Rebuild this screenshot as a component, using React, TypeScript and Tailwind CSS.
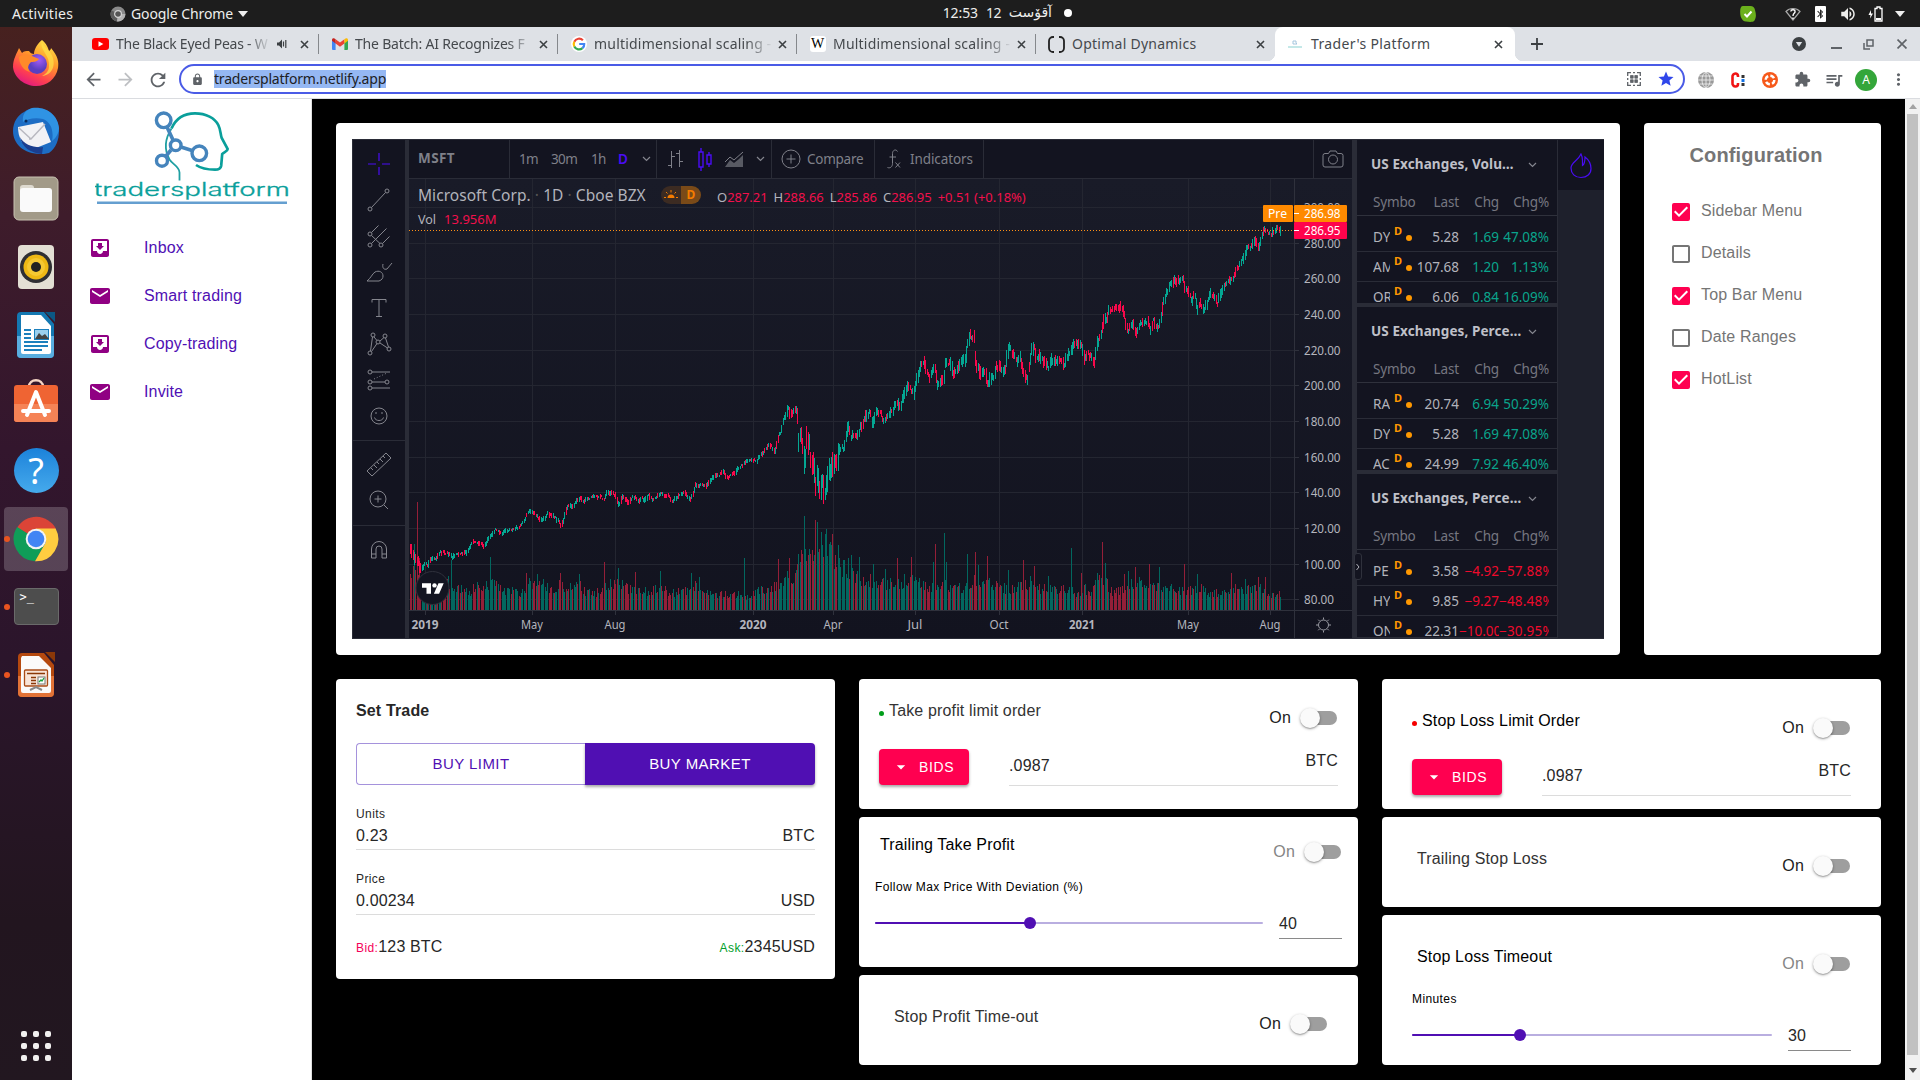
import React from "react";
import {
  MdArrowBack,
  MdArrowDropDown,
  MdArrowForward,
  MdBluetooth,
  MdCheckBox,
  MdCheckBoxOutlineBlank,
  MdExtension,
  MdLock,
  MdMail,
  MdMoreVert,
  MdMoveToInbox,
  MdQueueMusic,
  MdRefresh,
  MdStar,
  MdVolumeUp,
} from "react-icons/md";

const UI = "font-['Noto_Sans',sans-serif]";

/* ---------------------------------- System bar ---------------------------------- */

function SystemBar() {
  return (
    <div className={`${UI} flex h-[27px] w-full items-center bg-[#1d1d1d] text-[14px] text-[#eeeeec]`}>
      <span className="ml-3 w-[98px] tracking-[0.3px]">Activities</span>
      <svg width="16" height="16" viewBox="0 0 16 16">
        <circle cx="8" cy="8" r="7.5" fill="#8a8a8a" />
        <path d="M8 8 1.5 4.2A7.5 7.5 0 0 0 7 15.4z" fill="#5c5c5c" />
        <path d="M8 8h7.4A7.5 7.5 0 0 1 7 15.4z" fill="#b5b5b5" />
        <circle cx="8" cy="8" r="3.4" fill="#555" stroke="#d5d5d5" strokeWidth="1.2" />
      </svg>
      <span className="ml-[5px] tracking-[-0.1px]">Google Chrome</span>
      <svg className="ml-[5px]" width="10" height="6" viewBox="0 0 10 6"><path d="M0 0h10L5 6z" fill="#eee" /></svg>
      <div className="ml-auto flex -translate-y-px items-center">
        <span className="tracking-[-0.1px]">12:53</span>
        <span className="ml-2 tracking-[-0.5px]">12</span>
        <span className="ml-[5px] w-[46px] font-['DejaVu_Sans',sans-serif] text-[14px]" dir="rtl">آقۆست</span>
        <span className="ml-[12px] h-2 w-2 rounded-full bg-white" />
      </div>
      <div className="ml-[668px] mr-[15px] flex items-center">
        <svg width="16" height="16" viewBox="0 0 16 16">
          <path d="M3 0h7a5 5 0 0 1 5 4c1.500 5 1 8-.5 10.500C13 16.500 9 16 6 15.500 1 15 0 9 .2 5 .2 2 1 0 3 0z" fill="#6bb01c" />
          <path d="m4.500 8 2.500 2.500 4.500-5" fill="none" stroke="#fff" strokeWidth="2" />
        </svg>
        <svg className="ml-[29px]" width="16" height="14" viewBox="0 0 16 14">
          <path d="M8 13 1 4.500C4.500.5 11.500.5 15 4.500z" fill="none" stroke="#aaa" strokeWidth="1.200" />
          <path d="M5.800 4.500C6 2 10.500 2 10 5 9.700 6.500 8 6.500 8 9m0 1.500v1.500" fill="none" stroke="#fff" strokeWidth="1.400" />
        </svg>
        <span className="ml-[14px] flex h-4 w-[11px] items-center justify-center rounded-[1px] bg-white text-[#1d1d1d]"><MdBluetooth size={14} /></span>
        <MdVolumeUp className="ml-[13px]" size={18} />
        <svg className="ml-[11px]" width="16" height="16" viewBox="0 0 16 16">
          <path d="M3 4 .500 9h2L2 12.500 5 7.500H3z" fill="#fff" />
          <path d="M7 2.500h2V1h3v1.500h2V15H7z" fill="none" stroke="#fff" strokeWidth="1.300" />
          <path d="M8 12h5v2H8z" fill="#fff" />
        </svg>
        <svg className="ml-[11px]" width="10" height="6" viewBox="0 0 10 6"><path d="M0 0h10L5 6z" fill="#eee" /></svg>
      </div>
    </div>
  );
}

/* ------------------------------------- Dock ------------------------------------- */

function FirefoxIcon() {
  return (
    <svg width="48" height="48" viewBox="0 0 48 48">
      <defs>
        <linearGradient id="ffA" x1="0.8" y1="0" x2="0.3" y2="1">
          <stop offset="0" stopColor="#ffe84a" /><stop offset="0.4" stopColor="#ff9a2a" /><stop offset="0.75" stopColor="#ff4050" /><stop offset="1" stopColor="#e01882" />
        </linearGradient>
        <radialGradient id="ffB" cx="0.6" cy="0.3"><stop offset="0" stopColor="#a45cf5" /><stop offset="1" stopColor="#5a3fc0" /></radialGradient>
      </defs>
      <path d="M30 1c5 4 6 8 7 11 2-1 2-3 2-3 7 8 8 14 7 20-2 11-11 18-22 18S2 39 1 28C1 20 5 14 7 9l3 5c2-2 4-2 7-2 1 2 3 3 5 3 0-5 4-11 8-14z" fill="url(#ffA)" />
      <circle cx="25" cy="25" r="10" fill="url(#ffB)" />
      <path d="M7 18c5-4 10-3 13-1l7 3c-2 3-6 3-8 3-3 3-4 6-1 10-6-1-11-8-11-15z" fill="#ff8a2a" />
      <path d="M30 3c-3 7 8 13 7 24 0 5-3 8-7 10 12-1 15-14 8-24-3-4-6-5-8-10z" fill="#ffdf48" opacity=".75" />
    </svg>
  );
}

function ThunderbirdIcon() {
  return (
    <svg width="48" height="48" viewBox="0 0 48 48">
      <path d="M24 1c13 0 23 9 23 23 0 9-3 17-10 22l-5 1C12 48 1 37 1 24 1 15 6 8 12 5c4-3 8-4 12-4z" fill="#1d6dc4" />
      <path d="M20 1c-6 2-10 6-9 14 4-3 12-5 20-3 8 3 11 12 9 22 4-3 7-8 7-13C46 8 34-1 20 1z" fill="#2f93e4" />
      <path d="M6 20 31 15l8 20-20 8c-8-4-13-12-13-23z" fill="#f2f2f5" />
      <path d="m7 21 12 11 14-15M19 32l-2 0" fill="none" stroke="#b8b8c0" strokeWidth="1.500" />
      <path d="M8 30c4 8 14 11 23 10l-1 7C18 46 10 40 8 30z" fill="#1b3e8f" />
      <circle cx="14" cy="14" r="1.500" fill="#092c5c" />
    </svg>
  );
}

function FilesIcon() {
  return (
    <svg width="46" height="46" viewBox="0 0 46 46">
      <rect x="1" y="1" width="44" height="43" rx="5" fill="#a29a88" />
      <rect x="1" y="1" width="44" height="43" rx="5" fill="none" stroke="#c8c1b1" />
      <path d="M7 12a3 3 0 0 1 3-3h8a3 3 0 0 1 3 3v3H7z" fill="#dedad0" />
      <rect x="7" y="12" width="32" height="24" rx="3" fill="#fafafa" />
    </svg>
  );
}

function RhythmboxIcon() {
  return (
    <svg width="38" height="46" viewBox="0 0 38 46">
      <rect x="1" y="1" width="36" height="44" rx="4" fill="#e3dfd4" />
      <circle cx="19" cy="23" r="16" fill="#2f2f33" />
      <circle cx="19" cy="23" r="12.500" fill="#eeb814" />
      <circle cx="19" cy="23" r="9" fill="#f5c832" />
      <circle cx="19" cy="23" r="5" fill="#222" />
    </svg>
  );
}

function WriterIcon() {
  return (
    <svg width="38" height="46" viewBox="0 0 38 46">
      <path d="M4 0h23l10 12v30a4 4 0 0 1-4 4H4a4 4 0 0 1-4-4V4a4 4 0 0 1 4-4z" fill="#1478b2" />
      <path d="M0 24h37v18a4 4 0 0 1-4 4H4a4 4 0 0 1-4-4z" fill="#59aee0" />
      <path d="M4 3h20l10 11v26a2 2 0 0 1-2 2H6a2 2 0 0 1-2-2z" fill="#fff" />
      <path d="M28 0h10v10z" fill="#0b5885" />
      <path d="M7 18h7M7 22h7M7 26h7M7 30h24M7 34h24M7 38h18" stroke="#1c80bd" strokeWidth="2" />
      <rect x="17.500" y="17.500" width="14" height="10" fill="#9bd0ef" stroke="#1c80bd" />
      <path d="m18 27 4-6 3 3 3-2 4 5z" fill="#444" />
    </svg>
  );
}

function SoftwareIcon() {
  return (
    <svg className="-mt-[5px]" width="46" height="48" viewBox="0 0 46 48">
      <path d="M16 10C16 1 30 1 30 10" fill="none" stroke="#f5d5c5" strokeWidth="2.500" />
      <path d="M4 8h38a3 3 0 0 1 3 3v31a3 3 0 0 1-3 3H4a3 3 0 0 1-3-3V11a3 3 0 0 1 3-3z" fill="#ef6433" />
      <path d="M1 27h44v15a3 3 0 0 1-3 3H4a3 3 0 0 1-3-3z" fill="#f58356" />
      <path d="m14 38 9-23 9 23M10 34h26" fill="none" stroke="#fff" strokeWidth="4" strokeLinecap="round" strokeLinejoin="round" />
    </svg>
  );
}

function HelpIcon() {
  return (
    <span className="-mt-px flex h-[45px] w-[45px] items-center justify-center rounded-full bg-linear-to-b from-[#1b82da] to-[#45aaec] font-['Noto_Sans',sans-serif] text-[36px] leading-none text-white">
      ?
    </span>
  );
}

function ChromeIcon() {
  return (
    <svg width="46" height="46" viewBox="0 0 46 46">
      <path d="M23 23 4.200 11.500A22.300 22.300 0 0 1 42.800 12.500z" fill="#db4437" />
      <path d="M23 23 4.200 11A22.300 22.300 0 0 0 22 45.300L32 28z" fill="#0f9d58" />
      <path d="M23 12.500h19.600A22.300 22.300 0 0 1 22 45.300L33 26z" fill="#ffcd40" />
      <circle cx="23" cy="23" r="10.300" fill="#f4f4f4" />
      <circle cx="23" cy="23" r="8.300" fill="#4285f4" />
    </svg>
  );
}

function TerminalIcon() {
  return (
    <span className="-mt-px h-[37px] w-[45px] rounded-[4px] border border-[#6a6a6a] bg-[#4d4d4d] pl-[5px] font-['DejaVu_Sans_Mono',monospace] text-[12px] leading-[17px] text-white">
      &gt;_
    </span>
  );
}

function ImpressIcon() {
  return (
    <svg width="37" height="46" viewBox="0 0 37 46">
      <path d="M4 1h22l10 12v28a4 4 0 0 1-4 4H4a4 4 0 0 1-4-4V5a4 4 0 0 1 4-4z" fill="#b5490f" />
      <path d="M0 24h36v17a4 4 0 0 1-4 4H4a4 4 0 0 1-4-4z" fill="#e27337" />
      <path d="M4 4h17l12 12v23a2 2 0 0 1-2 2H5a2 2 0 0 1-2-2V6z" fill="#fbfafa" />
      <path d="M27 0h10v10z" fill="#8b3808" />
      <rect x="6.500" y="18" width="23" height="16" rx="1" fill="#f8e4d8" stroke="#a94b17" strokeWidth="1.300" />
      <path d="M9 21.500h18M13 25.500h5M13 28.500h5M13 31.500h5" stroke="#8b3808" strokeWidth="1.700" />
      <rect x="20" y="25" width="7" height="7" fill="#fff" stroke="#777" />
      <path d="m21 30 2-2 1 1 2-3" fill="none" stroke="#1aa13c" strokeWidth="1.300" />
      <path d="m12 38 6-3 6 3" fill="none" stroke="#888" strokeWidth="2" />
    </svg>
  );
}

const dockItems = [
  { icon: <FirefoxIcon />, running: false, active: false },
  { icon: <ThunderbirdIcon />, running: false, active: false },
  { icon: <FilesIcon />, running: false, active: false },
  { icon: <RhythmboxIcon />, running: false, active: false },
  { icon: <WriterIcon />, running: false, active: false },
  { icon: <SoftwareIcon />, running: false, active: false },
  { icon: <HelpIcon />, running: false, active: false },
  { icon: <ChromeIcon />, running: true, active: true },
  { icon: <TerminalIcon />, running: true, active: false },
  { icon: <ImpressIcon />, running: true, active: false },
];

function Dock() {
  return (
    <div className="flex w-[72px] shrink-0 flex-col bg-[linear-gradient(180deg,#47211f_0%,#3e1c2b_18%,#33162d_40%,#2b152b_60%,#22151f_85%,#221720_100%)] pt-[2px]">
      {dockItems.map((item, i) => (
        <div key={i} className="relative flex h-[68px] items-center justify-center">
          {item.active && <span className="absolute inset-x-1 inset-y-[2px] rounded-[4px] bg-white/20" />}
          {item.running && <span className="absolute left-1 h-[6px] w-[6px] rounded-full bg-[#e95420]" />}
          <span className="relative flex">{item.icon}</span>
        </div>
      ))}
      <div className="mb-[19px] ml-[21px] mt-auto grid w-[30px] grid-cols-3 gap-[6px]">
        {Array.from({ length: 9 }, (_, i) => (
          <span key={i} className="h-[6px] w-[6px] rounded-[2px] bg-[#f2f1f0]" />
        ))}
      </div>
    </div>
  );
}

/* ------------------------------------ Browser ------------------------------------ */

function YoutubeIcon() {
  return (
    <svg width="17" height="12" viewBox="0 0 17 12"><rect width="17" height="12" rx="3" fill="#f00" /><path d="M6.500 3.200v5.600L11.300 6z" fill="#fff" /></svg>
  );
}
function GmailIcon() {
  return (
    <svg width="16" height="12" viewBox="0 0 16 12">
      <path d="M0 2v9a1 1 0 0 0 1 1h2.600V4z" fill="#4285f4" />
      <path d="M16 2v9a1 1 0 0 1-1 1h-2.600V4z" fill="#34a853" />
      <path d="M3.600 1.200 8 4.500l4.400-3.300V5.500L8 8.800 3.600 5.500z" fill="#ea4335" />
      <path d="M0 1.800C0 .2 1.900-.5 3.600 1.200V5.500L0 2.800z" fill="#c5221f" />
      <path d="M16 1.800C16 .2 14.100-.5 12.400 1.200V5.500L16 2.800z" fill="#fbbc04" />
    </svg>
  );
}
function GoogleIcon() {
  return (
    <svg width="16" height="16" viewBox="0 0 16 16">
      <circle cx="8" cy="8" r="8" fill="#fff" />
      <path d="M11.900 4.300A5.300 5.300 0 0 0 3.300 5.700" fill="none" stroke="#ea4335" strokeWidth="2.200" />
      <path d="M3.300 5.700a5.300 5.300 0 0 0 0 4.800" fill="none" stroke="#fbbc05" strokeWidth="2.200" />
      <path d="M3.300 10.500a5.300 5.300 0 0 0 8.200 1.600" fill="none" stroke="#34a853" strokeWidth="2.200" />
      <path d="M11.500 12.100A5 5 0 0 0 13.200 8H8.200" fill="none" stroke="#4285f4" strokeWidth="2.200" />
    </svg>
  );
}
function WikiIcon() {
  return <span className="flex h-4 w-4 items-center justify-center rounded-[3px] bg-white font-['Liberation_Serif',serif] text-[14px] font-medium leading-none text-black">W</span>;
}
function OptimalIcon() {
  return (
    <svg width="17" height="17" viewBox="0 0 17 17"><path d="M6 1H5a4 4 0 0 0-4 4v7a4 4 0 0 0 4 4h1M11 1h1a4 4 0 0 1 4 4v7a4 4 0 0 1-4 4h-1" fill="none" stroke="#222" strokeWidth="1.800" /></svg>
  );
}
function TraderIcon() {
  return (
    <svg width="14" height="8" viewBox="0 0 14 8"><path d="M0 7h14" stroke="#a5dcdc" strokeWidth="1.300" /><path d="M5 1h3v2l1 1H5z" fill="none" stroke="#a5c6de" /></svg>
  );
}
function CloseIcon() {
  return (
    <svg width="9" height="9" viewBox="0 0 9 9"><path d="m1 1 7 7M8 1 1 8" stroke="#3c4043" strokeWidth="1.600" /></svg>
  );
}

const tabs = [
  { icon: <YoutubeIcon />, title: "The Black Eyed Peas - W", audio: true, fade: true, track: "tracking-[-0.25px]" },
  { icon: <GmailIcon />, title: "The Batch: AI Recognizes F", audio: false, fade: true, track: "tracking-[-0.2px]" },
  { icon: <GoogleIcon />, title: "multidimensional scaling -", audio: false, fade: true, track: "tracking-[0.2px]" },
  { icon: <WikiIcon />, title: "Multidimensional scaling -", audio: false, fade: true, track: "tracking-[0.2px]" },
  { icon: <OptimalIcon />, title: "Optimal Dynamics", audio: false, fade: false, track: "tracking-[0.25px]" },
];

function TabStrip() {
  return (
    <div className={`${UI} flex h-[34px] items-center bg-[#dee1e6] pl-2 text-[14px] text-[#45494d]`}>
      {tabs.map((t, i) => (
        <div key={t.title} className="flex h-full w-[239px] items-center pl-3">
          <span className="flex w-[17px] justify-center">{t.icon}</span>
          <span
            className={`-mt-[2px] ml-[7px] overflow-hidden whitespace-nowrap ${t.track} ${t.audio ? "w-[155px]" : "w-[179px]"} ${
              t.fade ? "[mask-image:linear-gradient(90deg,#000_85%,transparent_100%)]" : ""
            }`}
          >
            {t.title}
          </span>
          {t.audio && (
            <svg className="ml-[6px] mr-[9px]" width="10" height="10" viewBox="0 0 10 10">
              <path d="M0 3.500h2L5 .5v9L2 6.500H0z" fill="#3c4043" /><path d="M6.500 2.500v5M8.800 1v8" stroke="#3c4043" strokeWidth="1.200" />
            </svg>
          )}
          <span className={t.audio ? "ml-[4px]" : "ml-[5px]"}><CloseIcon /></span>
          {i < 4 && <span className="ml-auto h-5 w-px bg-[#85888c]" />}
        </div>
      ))}
      <div className="relative flex h-[34px] w-[240px] items-center rounded-t-[8px] bg-white pl-[13px]">
        <span className="absolute -left-2 bottom-0 h-2 w-2 bg-[radial-gradient(circle_at_0_0,#dee1e6_8px,#fff_8.5px)]" />
        <span className="absolute -right-2 bottom-0 h-2 w-2 bg-[radial-gradient(circle_at_100%_0,#dee1e6_8px,#fff_8.5px)]" />
        <TraderIcon />
        <span className="-mt-[2px] ml-[9px] w-[183px] tracking-[0.35px]">Trader's Platform</span>
        <CloseIcon />
      </div>
      <svg className="ml-4" width="12" height="12" viewBox="0 0 12 12"><path d="M6 0v12M0 6h12" stroke="#3c4043" strokeWidth="1.800" /></svg>
      <div className="ml-auto mr-[13px] flex items-center">
        <svg width="14" height="14" viewBox="0 0 14 14"><circle cx="7" cy="7" r="7" fill="#3c4043" /><path d="M3.800 5h6.400L7 9.800z" fill="#dee1e6" /></svg>
        <svg className="ml-[25px] mt-2" width="11" height="2"><path d="M0 0h11v2H0z" fill="#5f6368" /></svg>
        <svg className="ml-[21px]" width="11" height="11" viewBox="0 0 11 11"><path d="M4 1h6v6H4zM1 4v6h6" fill="none" stroke="#5f6368" strokeWidth="1.500" /></svg>
        <span className="ml-[23px]"><svg width="10" height="10" viewBox="0 0 9 9"><path d="m.5.5 8 8M8.500.5l-8 8" stroke="#5f6368" strokeWidth="1.500" /></svg></span>
      </div>
    </div>
  );
}

function AddressBar() {
  return (
    <div className="flex h-[38px] items-center border-b border-[#dadce0] bg-white text-[#5f6368]">
      <MdArrowBack className="ml-[11px]" size={21} />
      <MdArrowForward className="ml-[11px] text-[#bdbfc2]" size={21} />
      <MdRefresh className="ml-[11px]" size={22} />
      <div className="-mt-px ml-[10px] flex h-[30px] w-[1506px] items-center rounded-full border-2 border-[#4a5be6] bg-white">
        <MdLock className="ml-[10px]" size={13} />
        <span className={`${UI} ml-[10px] h-[18px] w-[172px] whitespace-nowrap bg-[#95b8f3] text-[14px] leading-[18px] tracking-[-0.2px] text-[#202124]`}>
          tradersplatform.netlify.app
        </span>
        <svg className="ml-auto" width="14" height="14" viewBox="0 0 14 14" fill="none" stroke="#5f6368" strokeWidth="1.300">
          <path d="M.7 4V.7H4M10 .7h3.300V4M13.300 10v3.300H10M4 13.300H.7V10M6 .7h2M6 13.300h2M.7 6v2M13.300 6v2" />
          <path d="M3.500 3.500h2.700v2.700H3.500zM7.800 3.500h2.700v2.700H7.800zM3.500 7.800h2.700v2.700H3.500zM7.800 7.800h2.700v2.700H7.800z" fill="#5f6368" strokeWidth=".8" />
        </svg>
        <MdStar className="ml-[16px] mr-[8px] text-[#2f46ea]" size={18} />
      </div>
      <div className="ml-[5px] flex items-center">
        <span className="flex w-8 justify-center">
          <svg width="16" height="16" viewBox="0 0 16 16" fill="none" stroke="#f2f2f2" strokeWidth=".8">
            <circle cx="8" cy="8" r="8" fill="#999" stroke="none" />
            <path d="M8 0v16M0 8h16M1.500 4h13M1.500 12h13" /><ellipse cx="8" cy="8" rx="4" ry="7.500" />
          </svg>
        </span>
        <span className="flex w-8 justify-center">
          <svg width="16" height="16" viewBox="0 0 16 16">
            <path d="M8 5V4a2.500 2.500 0 0 0-2.500-2.500A3 3 0 0 0 2.500 5v6a3 3 0 0 0 3 3.500A2.500 2.500 0 0 0 8 12v-1" fill="none" stroke="#f01414" strokeWidth="2.600" />
            <path d="M11.500 3h3v3h-3zM11.500 11h3v3h-3z" fill="#333" /><path d="M11.500 7h3v3h-3z" fill="#1273e6" />
          </svg>
        </span>
        <span className="flex w-8 justify-center">
          <svg width="16" height="16" viewBox="0 0 16 16">
            <circle cx="8" cy="8" r="8" fill="#f6591b" />
            <circle cx="8" cy="8" r="4.300" fill="none" stroke="#fff" strokeWidth="2.400" strokeDasharray="4.500 2.200" />
          </svg>
        </span>
        <span className="flex w-8 justify-center"><MdExtension size={17} /></span>
        <span className="flex w-8 justify-center"><MdQueueMusic size={20} /></span>
        <span className="flex w-8 justify-center">
          <span className={`${UI} flex h-[22px] w-[22px] items-center justify-center rounded-full bg-[#34a63a] text-[12px] text-white`}>A</span>
        </span>
        <span className="flex w-8 justify-center"><MdMoreVert size={19} /></span>
      </div>
    </div>
  );
}

/* ------------------------------------ Sidebar ------------------------------------ */

function Logo() {
  return (
    <svg width="198" height="97" viewBox="0 0 198 97">
      <path d="M76.500 18.500C81 8 90 3.300 100 3.300c11 0 20 5 23.300 11.700 2.500 5 2 9 3.400 13l6 11c0 2.500-4 3-5.500 5l-1 11.700c-.5 3-2.500 4-6.200 4-8 0-15-2-19-4.700" fill="none" stroke="#0a9f9b" strokeWidth="2.700" />
      <path d="M76.500 18.500c-7 11-7 22-2 31 3 5 10 7 10 13v8" fill="none" stroke="#1f9fa2" strokeWidth="1.800" />
      <path d="M72 17l6 13M86 37l11 3.500M76 40l-5 6" fill="none" stroke="#4584bc" strokeWidth="3.600" />
      <g stroke="#4584bc" strokeWidth="3.400" fill="#fff">
        <circle cx="68.700" cy="10.300" r="7.300" /><circle cx="80.700" cy="35.300" r="5.300" /><circle cx="104.300" cy="43.300" r="7.300" /><circle cx="67" cy="50.700" r="5.500" />
      </g>
      <text x="-1" y="86.200" textLength="196" lengthAdjust="spacingAndGlyphs" fontFamily="Inter, sans-serif" fontWeight="300" fontSize="18" fill="#0a9f9b" stroke="#0a9f9b" strokeWidth=".3">tradersplatform</text>
      <path d="M2 92.700h190" stroke="#659fd0" strokeWidth="2.500" />
    </svg>
  );
}

const menu = [
  { label: "Inbox", icon: MdMoveToInbox },
  { label: "Smart trading", icon: MdMail },
  { label: "Copy-trading", icon: MdMoveToInbox },
  { label: "Invite", icon: MdMail },
];

function Sidebar() {
  return (
    <div className="flex w-[240px] shrink-0 flex-col border-r border-[#e0e0e0] bg-white font-['Liberation_Sans',sans-serif]">
      <div className="ml-[23px] mt-[11px] h-[114px]"><Logo /></div>
      {menu.map(({ label, icon: Icon }) => (
        <div key={label} className="flex h-12 items-center pl-4 text-base tracking-[0.15px] text-[#4f0fb4]">
          <Icon size={24} className="text-[#900083]" />
          <span className="ml-8">{label}</span>
        </div>
      ))}
    </div>
  );
}

/* ------------------------------------- Chart ------------------------------------- */

/* Turning points of the price line, as flat x, y lists in thirds of a pixel. */
const priceA: number[] = [
  30,505, 38,525, 45,540, 52,545, 60,572, 68,562, 75,545, 82,558, 90,535, 100,535, 110,535, 120,518, 130,518, 140,520, 150,522, 157,536,
  165,522, 175,525, 185,520, 195,518, 205,510, 212,498, 220,485, 235,490, 245,492, 253,498, 262,480, 275,462, 285,450, 295,455, 305,462,
  315,453, 330,450, 345,445, 360,438, 370,425, 378,410, 385,392, 395,395, 405,402, 412,410, 420,420, 430,418, 437,410, 442,398, 450,405,
  462,410, 475,420, 482,438, 490,420, 497,395, 503,377, 515,380, 525,370, 540,352, 548,368, 556,360, 570,355, 585,350, 600,350, 610,358,
  618,343, 632,335, 645,345, 656,378, 665,350, 675,355, 685,370, 695,352, 705,350, 712,368, 722,355, 732,360, 745,345, 755,360, 765,355,
  775,345, 785,340, 795,350, 805,345, 815,366, 825,355, 840,345, 850,335, 858,348, 870,355, 878,340, 885,315, 900,315, 918,316, 930,300,
  945,283, 955,288, 970,275, 982,295, 995,280, 1005,280, 1015,262, 1025,258, 1035,245, 1050,240, 1062,240, 1070,240, 1080,225, 1092,215,
  1105,195, 1115,200, 1123,220, 1130,190, 1135,165, 1142,160, 1150,115, 1158,100, 1165,85, 1172,105, 1180,92, 1187,90, 1192,120, 1196,185,
  1202,165, 1208,215, 1214,250, 1218,180, 1226,190, 1233,245, 1240,250, 1247,320, 1252,260, 1257,345, 1262,330, 1267,300, 1273,345,
  1280,310, 1288,265, 1295,260, 1300,235, 1308,270, 1315,210, 1322,200, 1330,205, 1337,165, 1345,135, 1352,175, 1362,160, 1372,165, 1380,145,
];
const priceB: number[] = [
  5,685, 12,655, 22,643, 30,640, 37,670, 45,640, 60,640, 70,663, 80,650, 90,640, 98,632, 108,600, 113,615, 120,620, 125,600, 135,580, 145,555,
  155,575, 162,570, 170,530, 180,500, 190,480, 200,520, 208,535, 217,505, 225,510, 230,555, 240,540, 250,545, 254,485, 262,490, 270,490,
  278,525, 290,505, 305,485, 315,480, 322,425, 328,405, 335,415, 341,405, 347,500, 355,500, 362,530, 372,510, 380,550, 385,555, 392,530,
  400,530, 408,500, 418,500, 426,520, 436,500, 442,460, 448,435, 456,460, 463,465, 470,480, 480,475, 487,500, 495,530, 502,535, 508,490,
  516,440, 523,435, 528,485, 536,465, 545,475, 555,490, 564,500, 575,480, 590,482, 605,485, 613,495, 622,465, 630,455, 640,430, 650,430,
  657,425, 665,440, 672,480, 682,465, 692,470, 704,485, 710,435, 718,410, 726,385, 732,350, 737,360, 745,335, 755,335, 765,325, 778,320,
  790,330, 797,370, 805,390, 812,370, 820,375, 827,405, 835,380, 845,370, 855,365, 862,360, 870,390, 878,360, 886,375, 895,380, 902,360,
  908,310, 915,290, 925,262, 935,248, 945,240, 955,245, 968,228, 975,265, 985,280, 995,305, 1003,280, 1012,325, 1020,310, 1032,330,
  1042,305, 1052,280, 1062,290, 1072,310, 1080,280, 1090,260, 1102,245, 1110,245, 1120,230, 1130,205, 1140,190, 1150,170, 1160,145,
  1170,145, 1180,125, 1190,130, 1193,145, 1200,125, 1208,90, 1215,95, 1222,98, 1232,102, 1240,90, 1250,80, 1258,90,
];
const volumeA: number[] = [
  28,95, 36,150, 60,150, 75,100, 150,90, 165,75, 200,60, 260,90, 280,90, 310,65, 370,60, 380,90, 410,85, 430,90, 470,60, 480,90, 500,75,
  540,85, 560,55, 600,60, 650,100, 680,75, 700,60, 760,65, 780,85, 800,60, 860,60, 880,85, 910,52, 1000,52, 1040,46, 1070,62, 1120,76,
  1140,90, 1160,105, 1180,90, 1195,180, 1210,230, 1220,170, 1240,190, 1250,250, 1270,235, 1290,195, 1310,160, 1330,135, 1360,110, 1380,110,
];
const volumeB: number[] = [
  20,98, 50,88, 100,86, 140,96, 170,94, 200,85, 240,60, 250,95, 265,80, 320,72, 340,105, 370,88, 420,78, 450,68, 500,86, 520,98, 540,65,
  560,72, 600,62, 630,80, 645,45, 670,72, 690,58, 720,95, 740,85, 760,55, 800,78, 830,92, 860,68, 900,80, 940,68, 1000,62, 1020,72, 1040,56,
  1080,58, 1120,72, 1160,68, 1210,68, 1220,50, 1260,45,
];
const spikesA: number[] = [
  52,324, 43,198, 153,150, 271,158, 380,110, 412,108, 482,110, 535,108, 611,143, 653,125, 706,113, 781,116, 874,110, 898,98, 1030,155,
  1132,152, 1166,155, 1210,281, 1247,270, 1297,228, 1312,195, 1343,155, 1352,165, 1378,158,
];
const spikesB: number[] = [
  40,138, 76,123, 112,155, 154,158, 220,145, 226,197, 253,231, 257,143, 322,168, 345,173, 352,135, 382,162, 442,120, 490,150, 523,132,
  565,102, 631,186, 664,110, 709,110, 727,204, 733,142, 793,107, 805,116, 826,130, 868,138, 898,128, 973,138, 1012,107, 1114,110,
  1156,92, 1192,98, 1217,98, 1255,56,
];
/* Volume spikes that close on a falling day. */
const redSpikesA = new Set([52, 380, 482, 611, 706, 1132, 1166, 1247, 1297]);
const redSpikesB = new Set([112, 154, 226, 345, 382, 490, 523, 664, 727, 793, 826, 868, 973, 1114, 1192, 1217, 1255]);

interface Spike { x: number; height: number; up: boolean }

function pairs(flat: number[], dx: number, dy: number): [number, number][] {
  const out: [number, number][] = [];
  for (let i = 0; i < flat.length; i += 2) out.push([flat[i] / 3 + dx, flat[i + 1] / 3 + dy]);
  return out;
}
function toSpikes(flat: number[], dx: number, red: Set<number>): Spike[] {
  const out: Spike[] = [];
  for (let i = 0; i < flat.length; i += 2) out.push({ x: flat[i] / 3 + dx, height: flat[i + 1] / 3, up: !red.has(flat[i]) });
  return out;
}
function sample(points: [number, number][], x: number): number {
  if (x <= points[0][0]) return points[0][1];
  for (let i = 1; i < points.length; i++) {
    if (x <= points[i][0]) {
      const [x0, y0] = points[i - 1];
      const [x1, y1] = points[i];
      return y0 + ((y1 - y0) * (x - x0)) / (x1 - x0);
    }
  }
  return points[points.length - 1][1];
}

const price = [...pairs(priceA, 400, 380), ...pairs(priceB, 860, 200)];
const volume = [...pairs(volumeA, 400, 0), ...pairs(volumeB, 860, 0)];
const spikes = [...toSpikes(spikesA, 400, redSpikesA), ...toSpikes(spikesB, 860, redSpikesB)];

function makeRandom(seed: number) {
  let s = seed;
  return () => {
    s = (s * 1103515245 + 12345) % 2147483648;
    return s / 2147483648;
  };
}

interface Bar { x: number; top: number; height: number; volume: number; up: boolean }

function buildBars(): Bar[] {
  const rnd = makeRandom(77);
  const result: Bar[] = [];
  const step = 1.308;
  for (let i = 0; 410 + i * step < 1280; i++) {
    const exact = 410 + i * step;
    const x = Math.round(exact);
    const y = sample(price, exact);
    const slope = sample(price, exact + 1) - sample(price, exact - 1);
    const vol = exact < 422 ? 5 : exact < 785 ? 2 : exact < 796 ? 4 : exact < 838 ? 9 : exact < 960 ? 4.500 : exact < 1110 ? 4.500 : 3.700;
    const half = vol * (0.35 + rnd() * 1.0) + Math.abs(slope) * 0.22;
    const mid = y + (rnd() - 0.5) * vol;
    const up = slope < -1.2 ? rnd() < 0.75 : slope > 1.2 ? rnd() < 0.22 : rnd() < 0.5;
    result.push({ x, top: mid - half, height: Math.max(2, half * 2), volume: sample(volume, exact) * (0.66 + rnd() * 0.48), up });
  }
  spikes.forEach((s) => {
    const near = result.reduce((a, b) => (Math.abs(b.x - s.x) < Math.abs(a.x - s.x) ? b : a));
    near.volume = s.height;
    near.up = s.up;
  });
  return result;
}
const bars = buildBars();

const hLines = [207, 243, 278, 314, 350, 385, 421, 457, 492, 528, 564, 599];
const priceLabels = ["300.00", "280.00", "260.00", "240.00", "220.00", "200.00", "180.00", "160.00", "140.00", "120.00", "100.00", "80.00"];
const timeLabels = [
  { x: 425, t: "2019", w: 27, bold: true }, { x: 532, t: "May", w: 22, bold: false }, { x: 615, t: "Aug", w: 21, bold: false },
  { x: 753, t: "2020", w: 27, bold: true }, { x: 833, t: "Apr", w: 19, bold: false }, { x: 915, t: "Jul", w: 15, bold: false },
  { x: 999, t: "Oct", w: 19, bold: false }, { x: 1082, t: "2021", w: 26, bold: true }, { x: 1188, t: "May", w: 22, bold: false },
  { x: 1270, t: "Aug", w: 21, bold: false },
];

function ChartCanvas() {
  return (
    <svg className="block" width="943" height="459" viewBox="409 179 943 459" fontFamily="Noto Sans, sans-serif" fontSize="12">
      <defs>
        <linearGradient id="bg" x1="0" y1="0" x2="0" y2="1"><stop offset="0" stopColor="#191b28" /><stop offset="1" stopColor="#12131f" /></linearGradient>
      </defs>
      <rect x="409" y="179" width="943" height="459" fill="url(#bg)" />
      <g fill="#242631">
        {hLines.map((y) => <rect key={y} x="409" y={y} width="885" height="1" />)}
        {timeLabels.map((l) => <rect key={l.x} x={l.x} y="179" width="1" height="431" />)}
      </g>
      <g shapeRendering="crispEdges">
        {bars.map((b, i) => (
          <rect key={i} x={b.x} y={Math.round(610 - b.volume)} width="1" height={Math.round(b.volume)} fill={b.up ? "#02675f" : "#941f38"} />
        ))}
        {bars.map((b, i) => (
          <rect key={i} x={b.x} y={Math.round(b.top)} width="1" height={Math.round(b.height)} fill={b.up ? "#04a793" : "#f8094b"} />
        ))}
      </g>
      <path d="M409 230.500h885" stroke="#ff9016" strokeDasharray="1 2" />
      <g fill="#2f313c">
        <rect x="1294" y="179" width="1" height="459" />
        <rect x="409" y="610" width="943" height="1" />
        {hLines.map((y) => <rect key={y} x="1295" y={y} width="4" height="1" />)}
        {timeLabels.map((l) => <rect key={l.x} x={l.x} y="611" width="1" height="4" />)}
      </g>
      <g fill="#b4b5bd">
        {priceLabels.map((t, i) => (
          <text key={t} x="1304" y={hLines[i] + 4.500} textLength={t.length === 6 ? 36.500 : 30} lengthAdjust="spacingAndGlyphs">{t}</text>
        ))}
        {timeLabels.map((l) => (
          <text key={l.x} x={l.x - l.w / 2} y="629" textLength={l.w} lengthAdjust="spacingAndGlyphs" fontWeight={l.bold ? 700 : 400}>{l.t}</text>
        ))}
      </g>
      <rect x="1263" y="205" width="30" height="17" rx="1" fill="#ff8a00" />
      <rect x="1294" y="205" width="53" height="17" rx="1" fill="#ff8a00" />
      <rect x="1294" y="222" width="53" height="17" rx="1" fill="#ff034c" />
      <path d="M1294 213.500h5M1294 230.500h5" stroke="#fff" />
      <g fill="#fff">
        <text x="1268" y="218" textLength="19" lengthAdjust="spacingAndGlyphs">Pre</text>
        <text x="1304" y="218" textLength="36.500" lengthAdjust="spacingAndGlyphs">286.98</text>
        <text x="1304" y="235" textLength="36.500" lengthAdjust="spacingAndGlyphs">286.95</text>
      </g>
      <circle cx="432.500" cy="588" r="16.500" fill="#131521" stroke="#2f313c" />
      <path d="M422 583.200h9v10.600h-4.500v-6H422zM438.500 583.200h5.200l-4.600 10.600h-5.200z" fill="#fff" /><circle cx="434.500" cy="585.400" r="2.200" fill="#fff" />
      <g transform="translate(1323.500 625)" fill="none" stroke="#9a9ba3">
        <circle r="5" />
        <path d="M0-5.500V-7.500M0 5.500V7.500M-5.500 0H-7.500M5.500 0H7.500M-3.900-3.900l-1.400-1.400M3.900 3.900l1.400 1.400M-3.900 3.900l-1.400 1.400M3.900-3.900l1.400-1.400" />
      </g>
    </svg>
  );
}

function Chevron() {
  return <svg width="9" height="6" viewBox="0 0 9 6"><path d="m1 1 3.500 3.500L8 1" fill="none" stroke="#85868f" strokeWidth="1.200" /></svg>;
}

function ChartToolbar() {
  return (
    <div className={`${UI} flex h-[39px] items-center border-b border-[#2a2c37] bg-[#131420] text-[13.500px] text-[#7f8089]`}>
      <div className="flex h-full w-[101px] items-center border-r border-[#2a2c37] pb-px pl-[9px] text-[13.500px] font-bold tracking-[0.4px]">MSFT</div>
      <div className="flex h-full w-[147px] items-center border-r border-[#2a2c37] pl-[9px] tracking-[-0.6px]">
        <span className="w-8">1m</span>
        <span className="w-10">30m</span>
        <span className="w-[27px]">1h</span>
        <span className="w-6 font-semibold text-[#4a0cf5]">D</span>
        <Chevron />
      </div>
      <div className="flex h-full w-[115px] items-center border-r border-[#2a2c37] pl-[10px]">
        <svg width="17" height="20" viewBox="0 0 17 20" fill="none" stroke="#7f8089"><path d="M4.500 2v17M4.500 7.500H8M1 16.500h3.500M12.500 1v17M9 4.500h3.500M12.500 12.500H16" /></svg>
        <svg className="ml-[14px]" width="14" height="24" viewBox="0 0 14 24" fill="none" stroke="#4a0cf5" strokeWidth="1.400"><path d="M1 5h4v15H1zM3 1v4M3 20v4M9 8h4v9H9zM11 5v3M11 17v3" /></svg>
        <svg className="ml-[12px]" width="21" height="18" viewBox="0 0 21 18">
          <path d="m1 12 5-5 4 3 9-8" fill="none" stroke="#7f8089" /><path d="m1 17 5-7 4 3 5-4 4-4v12z" fill="#6a6b74" opacity=".8" />
        </svg>
        <span className="ml-[11px]"><Chevron /></span>
      </div>
      <div className="flex h-full w-[103px] items-center border-r border-[#2a2c37] pl-[9px]">
        <svg width="20" height="20" viewBox="0 0 20 20" fill="none" stroke="#7f8089"><circle cx="10" cy="10" r="9" /><path d="M10 5.500v9M5.500 10h9" /></svg>
        <span className="ml-[6px] tracking-[-0.25px]">Compare</span>
      </div>
      <div className="flex h-full w-[109px] items-center border-r border-[#2a2c37] pl-[12px]">
        <svg width="14" height="20" viewBox="0 0 14 20" fill="none" stroke="#7f8089"><path d="M10.500 2.500C9-.3 5.500 1 5.500 4.500v10c0 3.500-2.500 5-5 4M2.500 8H9M8.500 13.500l4.500 5M13 13.500l-4.500 5" /></svg>
        <span className="ml-[9px] tracking-[-0.1px]">Indicators</span>
      </div>
      <div className="ml-auto flex h-full w-[39px] items-center justify-center border-l border-[#2a2c37]">
        <svg width="22" height="18" viewBox="0 0 22 18" fill="none" stroke="#7f8089"><path d="M3 3.500h3.500L8 1h6l1.500 2.500H19a2 2 0 0 1 2 2V15a2 2 0 0 1-2 2H3a2 2 0 0 1-2-2V5.500a2 2 0 0 1 2-2z" /><circle cx="11" cy="9.500" r="4.500" /></svg>
      </div>
    </div>
  );
}

function Legend() {
  const items = [["O", "287.21"], ["H", "288.66"], ["L", "285.86"], ["C", "286.95"]];
  return (
    <div className={`${UI} absolute left-[9px] top-[6px] text-[#b2b3bb]`}>
      <div className="flex h-[22px] items-center whitespace-nowrap">
        <span className="w-[243px] text-[15.500px] tracking-[0.05px]">
          Microsoft Corp. <span className="text-[#555]">·</span> 1D <span className="text-[#555]">·</span> Cboe BZX
        </span>
        <span className="-mt-[3px] flex h-[18px] w-10 overflow-hidden rounded-full text-[12px] text-[#f57c00]">
          <span className="flex w-5 items-center justify-center bg-[#3c2b22]">
            <svg width="14" height="10" viewBox="0 0 14 10"><path d="M3.500 8a3.500 3.500 0 0 1 7 0z" fill="#f57c00" /><path d="M2 7.500H0M14 7.500h-2M7 2.500V0M3.500 3.500l-1.500-1.500M10.500 3.500 12 2" fill="none" stroke="#f57c00" /></svg>
          </span>
          <span className="flex w-5 items-center justify-center bg-[#7a4a18] font-bold">D</span>
        </span>
        <span className="ml-4 mt-[3px] flex gap-[6px] text-[13px] tracking-[-0.03px]">
          {items.map(([k, v]) => (
            <span key={k}>{k}<span className="text-[#f2104c]">{v}</span></span>
          ))}
          <span className="text-[#f2104c]">+0.51 (+0.18%)</span>
        </span>
      </div>
      <div className="mt-[3px] flex h-[20px] items-center text-[12.500px]">Vol<span className="ml-2 text-[13px] text-[#f2104c]">13.956M</span></div>
    </div>
  );
}

const toolSvg = { width: 28, height: 28, viewBox: "0 0 28 28", fill: "none", stroke: "#85868e" };

function DrawingTools() {
  return (
    <div className="flex w-[53px] shrink-0 flex-col items-center border-l border-[#2a2c37] bg-[#131420] pt-[10px]">
      <svg {...toolSvg} stroke="#4a0cf5"><path d="M14 3v8M14 17v8M3 14h8M17 14h8" strokeWidth="1.200" /></svg>
      <svg {...toolSvg} className="mt-2"><circle cx="5" cy="23" r="2" /><circle cx="22" cy="5" r="2" /><path d="M6.500 21.500l14-15" /></svg>
      <svg {...toolSvg} className="mt-2"><circle cx="5" cy="12" r="2" /><circle cx="5" cy="23" r="2" /><circle cx="16" cy="23" r="2" /><path d="M6.500 10.500l7-7M6.500 21.500l15-15M17.500 21.500l7-7M6.500 13.500l8.500 8" /></svg>
      <svg {...toolSvg} className="mt-2"><path d="M2 23h12c3-1 4-3 4-5 0-4-4-6-8-4-3 2-4 6-8 9zM18 6c-1 4 1 6 4 5l5-6" /></svg>
      <svg {...toolSvg} className="mt-2"><path d="M7 8.500V5.500h14v3M14 5.500v17M11 22.500h6" /></svg>
      <svg {...toolSvg} className="mt-2"><circle cx="8" cy="5" r="2" /><circle cx="20" cy="6" r="2" /><circle cx="5" cy="23" r="2" /><circle cx="24" cy="19" r="2" /><circle cx="13" cy="12" r="2" /><path d="M7.500 7l-2 14M9 7l3 3.500M15 11l4-3.500M20.500 8l3 9M6.500 21.500l5.500-8M15 13l7.500 5" /></svg>
      <svg {...toolSvg} className="mt-2"><circle cx="5" cy="6" r="2" /><circle cx="5" cy="16" r="2" /><circle cx="5" cy="22" r="2" /><circle cx="22" cy="16" r="2" /><path d="M7 6h18M7 16h13M7 22h18" /><path d="M9 13l13-6" strokeDasharray="1 2" /></svg>
      <svg {...toolSvg} className="mt-2"><circle cx="14" cy="14" r="8" /><path d="M9.500 15.500c1 4 8 4 9 0M11 10v2M17 10v2" /></svg>
      <div className="mt-[10px] h-px w-full shrink-0 bg-[#2a2c37]" />
      <svg {...toolSvg} className="mt-[9px]"><path d="M2 21 21 3l5 5L7 26zM6 18l2 2M9 15l3 3M12 12l2 2M15 9l3 3M18 6l2 2" /></svg>
      <svg {...toolSvg} className="mt-[8px]"><circle cx="13" cy="13" r="8" /><path d="M19 19l4 4M13 9.500v7M9.500 13h7" /></svg>
      <div className="mt-[11px] h-px w-full shrink-0 bg-[#2a2c37]" />
      <svg {...toolSvg} className="mt-[9px]"><path d="M6.500 23v-9a7.500 7.500 0 0 1 15 0v9H17v-9a3 3 0 0 0-6 0v9zM6.500 19H11M17 19h4.500" /></svg>
    </div>
  );
}

const lists = [
  {
    title: "US Exchanges, Volu…",
    color: "text-[#0aa48c]",
    rows: [["DY", "5.28", "1.69", "47.08%"], ["AM", "107.68", "1.20", "1.13%"], ["OR", "6.06", "0.84", "16.09%"]],
  },
  {
    title: "US Exchanges, Perce…",
    color: "text-[#0aa48c]",
    rows: [["RA", "20.74", "6.94", "50.29%"], ["DY", "5.28", "1.69", "47.08%"], ["AC", "24.99", "7.92", "46.40%"]],
  },
  {
    title: "US Exchanges, Perce…",
    color: "text-[#ef0a2c]",
    rows: [["PE", "3.58", "−4.92", "−57.88%"], ["HY", "9.85", "−9.27", "−48.48%"], ["ON", "22.31", "−10.00", "−30.95%"]],
  },
];

function HotList({ title, color, rows }: (typeof lists)[number]) {
  return (
    <div className="h-[163px] overflow-hidden bg-[#131420] text-[13.500px]">
      <div className="flex h-[47px] items-center pl-[14px] pt-[2px] text-[13.500px] font-bold tracking-[0.1px] text-[#bfc0c8]">
        <span className="w-[157px] whitespace-nowrap">{title}</span>
        <Chevron />
      </div>
      <div className="flex h-[29px] items-center border-b border-[#2f313c] pt-[2px] tracking-[-0.15px] text-[#767780]">
        <span className="w-[60px] pl-4">Symbo</span>
        <span className="w-[42px] text-right">Last</span>
        <span className="w-[40px] text-right">Chg</span>
        <span className="w-[50px] text-right">Chg%</span>
      </div>
      <div className="pt-[6px]">
        {rows.map(([s, last, chg, pct]) => (
          <div key={s} className="flex h-[30px] items-center border-b border-[#2a2c37] pt-[2px] text-[#b2b3bb]">
            <span className="ml-4 w-[17px] overflow-hidden whitespace-nowrap">{s}</span>
            <span className="mb-3 ml-[4px] w-[10px] text-[11px] font-bold text-[#ff9800]">D</span>
            <span className="ml-[2px] h-[6px] w-[6px] rounded-full bg-[#ff9800]" />
            <span className="w-[47px] text-right">{last}</span>
            <span className={`flex w-[40px] overflow-hidden whitespace-nowrap ${chg.length > 5 ? "" : "justify-end"} ${color}`}>{chg}</span>
            <span className={`flex w-[50px] overflow-hidden whitespace-nowrap ${pct.length > 6 ? "tracking-[0.2px]" : "justify-end"} ${color}`}>{pct}</span>
          </div>
        ))}
      </div>
    </div>
  );
}

function TradingWidget() {
  return (
    <div className="relative flex h-[500px] w-[1252px] overflow-hidden border-b border-t border-[#2a2c37] bg-[#2a2c37]">
      <DrawingTools />
      <div className="ml-1 flex w-[943px] shrink-0 flex-col">
        <ChartToolbar />
        <div className="relative">
          <ChartCanvas />
          <Legend />
        </div>
      </div>
      <div className={`${UI} ml-[5px] flex w-[200px] shrink-0 flex-col gap-1`}>
        {lists.map((l, i) => <HotList key={i} {...l} />)}
      </div>
      <div className="ml-px w-[46px] bg-[#1e202c]">
        <div className="flex h-[50px] items-center justify-center bg-[#131420] pt-[2px]">
          <svg className="-ml-px" width="22" height="26" viewBox="0 0 22 26" fill="none" stroke="#4a0cf5" strokeWidth="1.200">
            <path d="M11 1c1 2 1.500 4 1.500 6.500v5c2-1 2.500-5 2.500-8.500 4 3 6 7 6 11.500 0 5.500-4 9-10 9s-10-4-10-9.500C1 9 8 8 11 1z" />
          </svg>
        </div>
      </div>
      <span className="absolute left-[1002px] top-[413px] flex h-[27px] w-2 items-center justify-center rounded-[3px] border border-[#2f313c] bg-[#131420]">
        <svg width="4" height="8" viewBox="0 0 4 8"><path d="m.5 1 2.500 3-2.500 3" fill="none" stroke="#b2b3bb" /></svg>
      </span>
    </div>
  );
}

/* --------------------------------- Configuration --------------------------------- */

const options: [string, boolean][] = [
  ["Sidebar Menu", true],
  ["Details", false],
  ["Top Bar Menu", true],
  ["Date Ranges", false],
  ["HotList", true],
];

function Configuration() {
  return (
    <div className="h-[532px] w-[237px] rounded-[4px] bg-white text-[#757575]">
      <h2 className="pr-[13px] pt-5 text-center text-[20px] font-bold leading-6 tracking-[0.15px]">Configuration</h2>
      <div className="mt-[23px]">
        {options.map(([label, on]) => (
          <div key={label} className="flex h-[42px] items-center pl-[25px]">
            {on ? <MdCheckBox size={24} className="mt-[2px] text-[#ff0050]" /> : <MdCheckBoxOutlineBlank size={24} className="mt-[2px]" />}
            <span className="ml-2 text-base tracking-[0.15px]">{label}</span>
          </div>
        ))}
      </div>
    </div>
  );
}

/* ---------------------------------- Trade forms ---------------------------------- */

function Switch({ muted = false }: { muted?: boolean }) {
  return (
    <div className="flex h-5 items-center">
      <span className={`text-base leading-5 ${muted ? "text-[#858585]" : "text-[#212121]"}`}>On</span>
      <span className="relative ml-[9px] h-5 w-[37px]">
        <span className="absolute left-[3px] top-[3px] h-[14px] w-[34px] rounded-full bg-[#9e9e9e]" />
        <span className="absolute left-0 top-0 h-5 w-5 rounded-full bg-[#fafafa] shadow-[0_1px_3px_rgba(0,0,0,0.35),0_1px_1px_rgba(0,0,0,0.15)]" />
      </span>
    </div>
  );
}

function Card({ className, children }: { className: string; children: React.ReactNode }) {
  return <div className={`rounded-[4px] bg-white ${className}`}>{children}</div>;
}

function Field({ label, value, unit }: { label: string; value: string; unit: string }) {
  return (
    <div className="border-b border-[#dcdcdc]">
      <div className="text-[12px] leading-4 tracking-[0.4px]">{label}</div>
      <div className="flex justify-between pb-[3px] pt-[4px] leading-5">
        <span>{value}</span>
        <span>{unit}</span>
      </div>
    </div>
  );
}

function SetTrade() {
  return (
    <Card className="h-[300px] w-[499px] px-5 pt-[21px] text-base tracking-[0.15px] text-[#272727]">
      <h3 className="font-bold leading-[22px]">Set Trade</h3>
      <div className="mt-[21px] flex h-[42px] text-[15px] tracking-[0.45px]">
        <button className="w-[229px] rounded-l-[4px] border border-r-0 border-[#a592dc] text-[#500fb3]">BUY LIMIT</button>
        <button className="w-[230px] rounded-r-[4px] bg-[#500fb3] text-white shadow-[0_2px_3px_rgba(0,0,0,0.35)]">BUY MARKET</button>
      </div>
      <div className="mt-[21px]"><Field label="Units" value="0.23" unit="BTC" /></div>
      <div className="mt-[21px]"><Field label="Price" value="0.00234" unit="USD" /></div>
      <div className="mt-5 flex justify-between">
        <span><span className="text-[12px] tracking-[0.4px] text-[#f50057]">Bid:</span>123 BTC</span>
        <span><span className="text-[12px] tracking-[0.4px] text-[#009e2a]">Ask:</span>2345USD</span>
      </div>
    </Card>
  );
}

function LimitOrder({ title, dot, tone, pad }: { title: string; dot: string; tone: string; pad: string }) {
  return (
    <Card className={`h-[130px] text-base tracking-[0.15px] ${pad}`}>
      <div className="flex h-[50px] justify-between">
        <div className="flex h-[22px] items-center">
          <span className={`mt-[7px] h-[5px] w-[5px] rounded-full ${dot}`} />
          <span className={`ml-[5px] pt-[2px] leading-[22px] ${tone}`}>{title}</span>
        </div>
        <div className="mr-px mt-[9px]"><Switch /></div>
      </div>
      <div className="flex">
        <button className="flex h-9 w-[90px] items-center rounded-[4px] bg-[#ff0050] pl-3 text-[14px] tracking-[0.6px] text-white shadow-[0_2px_3px_rgba(0,0,0,0.35)]">
          <MdArrowDropDown size={20} />
          <span className="ml-2">BIDS</span>
        </button>
        <div className="ml-10 flex h-[37px] flex-1 justify-between border-b border-[#dcdcdc] text-[#272727]">
          <span className="pt-[7px] leading-5">.0987</span>
          <span className="pt-[2px] leading-5">BTC</span>
        </div>
      </div>
    </Card>
  );
}

function Slider({ percent, value }: { percent: number; value: string }) {
  return (
    <div className="flex items-center">
      <div className="relative h-3 flex-1">
        <div className="absolute inset-x-0 top-[5px] h-[2px] rounded-full bg-[#b9aee0]" />
        <div className="absolute left-0 top-[5px] h-[2px] rounded-full bg-[#500fb3]" style={{ width: `${percent}%` }} />
        <div className="absolute top-0 h-3 w-3 -translate-x-1/2 rounded-full bg-[#500fb3]" style={{ left: `${percent}%` }} />
      </div>
      <div className="ml-4 h-8 w-[63px] border-b border-[#8a8a8a] pt-px leading-[31px] text-[#272727]">{value}</div>
    </div>
  );
}

function MiddleColumn() {
  return (
    <div className="flex w-[499px] flex-col gap-2 tracking-[0.15px]">
      <LimitOrder title="Take profit limit order" dot="bg-[#009e1a]" tone="text-[#333]" pad="px-5 pt-5" />
      <Card className="h-[150px] px-4 pt-[17px]">
        <div className="flex h-[45px] justify-between pl-[5px]">
          <span className="leading-[22px] text-black">Trailing Take Profit</span>
          <div className="mr-px mt-2"><Switch muted /></div>
        </div>
        <div className="text-[12px] leading-4 tracking-[0.4px] text-black">Follow Max Price With Deviation (%)</div>
        <div className="mt-3"><Slider percent={40} value="40" /></div>
      </Card>
      <Card className="flex h-[90px] justify-between pl-[35px] pr-[31px] pt-[31px]">
        <span className="leading-[22px] text-[#333]">Stop Profit Time-out</span>
        <div className="mt-2"><Switch /></div>
      </Card>
    </div>
  );
}

function RightColumn() {
  return (
    <div className="flex w-[499px] flex-col gap-2 tracking-[0.15px]">
      <LimitOrder title="Stop Loss Limit Order" dot="bg-[#f50000]" tone="text-black" pad="px-[30px] pt-[30px]" />
      <Card className="flex h-[90px] justify-between pl-[35px] pr-[31px] pt-[31px]">
        <span className="leading-[22px] text-[#333]">Trailing Stop Loss</span>
        <div className="mt-2"><Switch /></div>
      </Card>
      <Card className="h-[150px] px-[30px] pt-[31px]">
        <div className="flex h-[45px] justify-between pl-[5px]">
          <span className="leading-[22px] text-black">Stop Loss Timeout</span>
          <div className="mr-px mt-2"><Switch muted /></div>
        </div>
        <div className="text-[12px] leading-4 tracking-[0.4px] text-black">Minutes</div>
        <div className="mt-3"><Slider percent={30} value="30" /></div>
      </Card>
    </div>
  );
}

function Scrollbar() {
  return (
    <div className="flex w-[15px] shrink-0 flex-col items-center justify-between bg-[#f1f1f1] py-[5px]">
      <svg width="8" height="5" viewBox="0 0 8 5"><path d="M0 5h8L4 0z" fill="#a3a3a3" /></svg>
      <span className="my-[5px] w-[11px] flex-1 bg-[#c1c1c1]" />
      <svg className="mb-[2px] mt-[8px]" width="8" height="5" viewBox="0 0 8 5"><path d="M0 0h8L4 5z" fill="#505050" /></svg>
    </div>
  );
}

export default function App() {
  return (
    <div className="flex h-[1080px] w-[1920px] flex-col overflow-hidden">
      <SystemBar />
      <div className="flex min-h-0 flex-1">
        <Dock />
        <div className="flex min-w-0 flex-1 flex-col">
          <TabStrip />
          <AddressBar />
          <div className="flex min-h-0 flex-1">
            <Sidebar />
            <main className="flex-1 bg-black pl-6 pt-6 font-['Liberation_Sans',sans-serif]">
              <div className="flex gap-6">
                <Card className="h-[532px] w-[1284px] p-4"><TradingWidget /></Card>
                <Configuration />
              </div>
              <div className="mt-6 flex items-start gap-6">
                <SetTrade />
                <MiddleColumn />
                <RightColumn />
              </div>
            </main>
            <Scrollbar />
          </div>
        </div>
      </div>
    </div>
  );
}
